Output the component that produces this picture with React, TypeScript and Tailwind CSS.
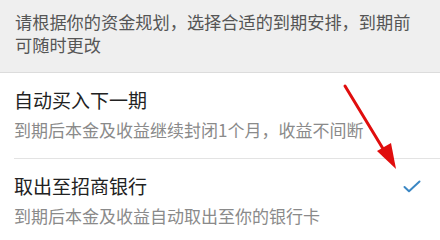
const font = {
  fontFamily: '"Noto Sans CJK SC", "Noto Sans", sans-serif',
};

interface Option {
  id: number;
  title: string;
  desc: string;
  selected: boolean;
}

const options: Option[] = [
  {
    id: 1,
    title: "自动买入下一期",
    desc: "到期后本金及收益继续封闭1个月，收益不间断",
    selected: false,
  },
  {
    id: 2,
    title: "取出至招商银行",
    desc: "到期后本金及收益自动取出至你的银行卡",
    selected: true,
  },
];

function Check() {
  return (
    <svg width="18" height="13" viewBox="0 0 18 13" fill="none">
      <path
        d="M1.5 7 L6 11.2 L16.5 1.5"
        stroke="#3b87c4"
        strokeWidth="2"
        strokeLinecap="round"
        strokeLinejoin="round"
      />
    </svg>
  );
}

export default function App() {
  return (
    <div
      className="relative w-[440px] h-[230px] overflow-hidden bg-white"
      style={font}
    >
      <div className="bg-[#efefef] border-b border-[#dcdcdc] pl-[15px] pr-2 pt-[10px] pb-[16px] text-[17.2px] leading-[23px] text-[#555]">
        请根据你的资金规划，选择合适的到期安排，到期前
        <br />
        可随时更改
      </div>

      {options.map((o, i) => (
        <div key={o.id} className="pl-[14px]">
          <div
            className={`pt-[15px] pb-[16px] pr-[19px] ${
              i < options.length - 1 ? "border-b border-[#e3e3e3]" : ""
            }`}
          >
            <div className="flex items-center justify-between">
              <span className="text-[19px] leading-[24px] text-[#222]">
                {o.title}
              </span>
              {o.selected && <Check />}
            </div>
            <div className="mt-[6px] text-[17px] leading-[24px] text-[#8a8a8a]">
              {o.desc}
            </div>
          </div>
        </div>
      ))}

      {/* red annotation arrow */}
      <svg
        className="absolute left-0 top-0 pointer-events-none"
        width="440"
        height="230"
        viewBox="0 0 440 230"
      >
        <line
          x1="345"
          y1="86"
          x2="385"
          y2="152"
          stroke="#e00d0d"
          strokeWidth="3"
          strokeLinecap="round"
        />
        <polygon points="396,169 377,151 391,143" fill="#e00d0d" />
      </svg>
    </div>
  );
}
